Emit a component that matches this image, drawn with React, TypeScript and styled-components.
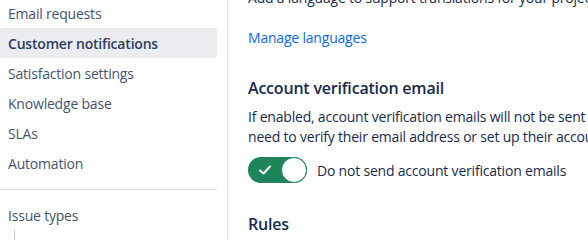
import React from "react";
import styled, { createGlobalStyle } from "styled-components";

const Global = createGlobalStyle`
  html, body { margin: 0; padding: 0; background: #ffffff; overflow: hidden; }
  body { font-family: "Open Sans", "Noto Sans", sans-serif; color: #172b4d; letter-spacing: -0.2px; }
`;

const Page = styled.div`
  display: flex;
  width: 588px;
  height: 240px;
  overflow: hidden;
`;

const Sidebar = styled.nav`
  width: 227px;
  flex: none;
  border-right: 1px solid #dcdfe4;
  display: flex;
  flex-direction: column;
  margin-top: -2px;
`;

const NavList = styled.div`
  width: 217px;
  display: flex;
  flex-direction: column;
`;

const NavItem = styled.div<{ $active?: boolean }>`
  height: 30px;
  display: flex;
  align-items: center;
  padding-left: 8px;
  font-size: 14px;
  border-radius: 3px;
  color: ${(p) => (p.$active ? "#2c3e5d" : "#44546f")};
  font-weight: ${(p) => (p.$active ? 600 : 400)};
  background: ${(p) => (p.$active ? "#ebecf0" : "transparent")};
  white-space: nowrap;
`;

const Divider = styled.hr`
  border: none;
  border-top: 1px solid #dcdfe4;
  margin: 11px 0 10px;
  width: 217px;
`;

const SubTree = styled.div`
  margin-left: 14px;
  border-left: 1px solid #c1c7d0;
  height: 12px;
`;

const Content = styled.main`
  flex: 1;
  padding-left: 20px;
  display: flex;
  flex-direction: column;
  margin-top: -12px;
  white-space: nowrap;
  overflow: hidden;
`;

const Text = styled.p<{ $top?: number }>`
  margin: ${(p) => p.$top ?? 0}px 0 0;
  font-size: 14px;
  line-height: 20px;
  color: #172b4d;
`;

const Link = styled.a`
  font-size: 14px;
  line-height: 20px;
  color: #0c66e4;
  text-decoration: none;
  margin-top: 20px;
`;

const Heading = styled.h3<{ $top: number }>`
  margin: ${(p) => p.$top}px 0 0;
  font-size: 16px;
  line-height: 24px;
  font-weight: 600;
  color: #172b4d;
`;

const ToggleRow = styled.label`
  display: flex;
  align-items: center;
  gap: 10px;
  margin-top: 10px;
  font-size: 14px;
  color: #172b4d;
`;

const Track = styled.span`
  position: relative;
  width: 59px;
  height: 26px;
  border-radius: 13px;
  background: #1f845a;
  display: flex;
  align-items: center;
  padding-left: 10px;
  box-sizing: border-box;
  flex: none;
`;

const Knob = styled.span`
  position: absolute;
  right: 0;
  top: 0;
  width: 26px;
  height: 26px;
  border-radius: 50%;
  background: #ffffff;
  border: 1.5px solid #1f845a;
  box-sizing: border-box;
`;

export default function App() {
  return (
    <>
      <Global />
      <Page>
        <Sidebar>
          <NavList>
            <NavItem>Email requests</NavItem>
            <NavItem $active>Customer notifications</NavItem>
            <NavItem>Satisfaction settings</NavItem>
            <NavItem>Knowledge base</NavItem>
            <NavItem>SLAs</NavItem>
            <NavItem>Automation</NavItem>
            <Divider />
            <NavItem>Issue types</NavItem>
            <SubTree />
          </NavList>
        </Sidebar>
        <Content>
          <Text>Add a language to support translations for your project.</Text>
          <Link href="#">Manage languages</Link>
          <Heading $top={28}>Account verification email</Heading>
          <Text $top={7}>
            If enabled, account verification emails will not be sent to customers.
          </Text>
          <Text>need to verify their email address or set up their account.</Text>
          <ToggleRow>
            <Track>
              <svg width="14" height="12" viewBox="0 0 14 12">
                <path d="M2 6.5 L5.5 9.5 L12 2.5" fill="none" stroke="#fff" strokeWidth="2" strokeLinecap="round" strokeLinejoin="round" />
              </svg>
              <Knob />
            </Track>
            Do not send account verification emails
          </ToggleRow>
          <Heading $top={29}>Rules</Heading>
        </Content>
      </Page>
    </>
  );
}
